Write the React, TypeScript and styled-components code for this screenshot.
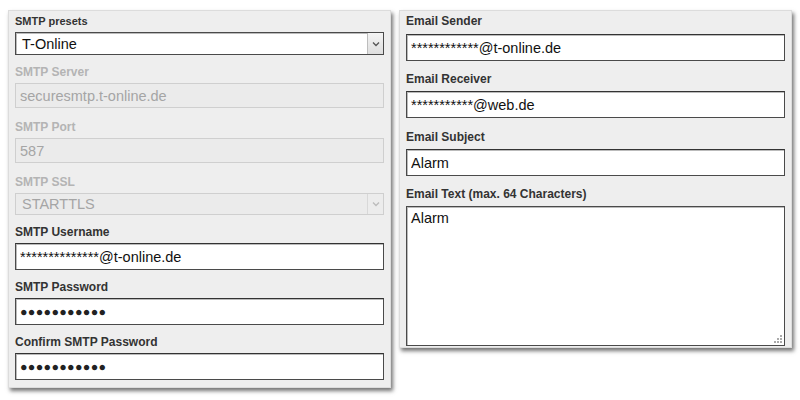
import React from 'react';
import styled, { createGlobalStyle } from 'styled-components';

const GlobalStyle = createGlobalStyle`
  html, body {
    margin: 0;
    padding: 0;
    background: #fff;
    font-family: "Liberation Sans", Arial, sans-serif;
  }
`;

const Page = styled.div`
  display: flex;
  align-items: flex-start;
  gap: 8px;
  padding: 10px 0 0 8px;
  width: 800px;
  height: 400px;
  box-sizing: border-box;
`;

const Panel = styled.div<{ $w: number; $pt: number; $pb: number }>`
  width: ${p => p.$w}px;
  box-sizing: border-box;
  padding: ${p => p.$pt}px 6px ${p => p.$pb}px 6px;
  background: #eeeeee;
  border: 1px solid #dcdcdc;
  box-shadow: 2px 3px 4px rgba(0, 0, 0, 0.55);
  display: flex;
  flex-direction: column;
`;

const Field = styled.div<{ $gap?: number }>`
  display: flex;
  flex-direction: column;
  flex-shrink: 0;
  margin-top: ${p => p.$gap ?? 0}px;
`;

const Label = styled.label<{ $disabled?: boolean; $small?: boolean; $mb?: number }>`
  display: block;
  height: 14px;
  font-size: ${p => (p.$small ? 11 : 12)}px;
  line-height: 14px;
  font-weight: bold;
  color: ${p => (p.$disabled ? '#b4b4b4' : '#333')};
  margin-bottom: ${p => p.$mb ?? 4}px;
`;

const Input = styled.input<{ $h: number }>`
  height: ${p => p.$h}px;
  flex-shrink: 0;
  box-sizing: border-box;
  width: 100%;
  margin: 0;
  padding: 0 4px;
  font-family: "Liberation Sans", Arial, sans-serif;
  font-size: 14.5px;
  color: #111;
  background: #fff;
  border: 1px solid #4a4a4a;
  border-top-color: #333;
  box-shadow: inset 1px 1px 0 #bbb;
  outline: none;

  &:disabled {
    background: #ebebeb;
    color: #a5a5a5;
    border-color: #cfcfcf;
    box-shadow: none;
  }
`;

const Dots = styled(Input)`
  font-size: 12.5px;
  letter-spacing: 0.3px;
  color: #222;
`;

const SelectBox = styled.div<{ $h: number; $disabled?: boolean }>`
  height: ${p => p.$h}px;
  flex-shrink: 0;
  box-sizing: border-box;
  display: flex;
  align-items: stretch;
  background: ${p => (p.$disabled ? '#ebebeb' : '#fff')};
  border: 1px solid ${p => (p.$disabled ? '#cfcfcf' : '#4a4a4a')};
  box-shadow: ${p => (p.$disabled ? 'none' : 'inset 1px 1px 0 #bbb')};
`;

const SelectValue = styled.span<{ $disabled?: boolean }>`
  flex: 1;
  display: flex;
  align-items: center;
  padding-left: 6px;
  font-size: 14.5px;
  color: ${p => (p.$disabled ? '#a5a5a5' : '#111')};
`;

const ArrowBox = styled.span<{ $disabled?: boolean }>`
  width: 15px;
  display: flex;
  align-items: center;
  justify-content: center;
  border-left: 1px solid ${p => (p.$disabled ? '#d8d8d8' : '#bdbdbd')};
  background: ${p => (p.$disabled ? '#ececec' : 'linear-gradient(#f4f4f4, #dedede)')};
`;

const TextArea = styled.div`
  position: relative;
  height: 140px;
  box-sizing: border-box;
  padding: 3px 4px;
  font-size: 14.5px;
  color: #111;
  background: #fff;
  border: 1px solid #4a4a4a;
  box-shadow: inset 1px 1px 0 #bbb;
`;

const Grip = styled.svg`
  position: absolute;
  right: 1px;
  bottom: 1px;
`;

const Chevron = ({ color }: { color: string }) => (
  <svg width="8" height="6" viewBox="0 0 8 6">
    <path d="M1 1.5 L4 4.5 L7 1.5" fill="none" stroke={color} strokeWidth="1.3" />
  </svg>
);

const Select = ({ value, h, disabled }: { value: string; h: number; disabled?: boolean }) => (
  <SelectBox $h={h} $disabled={disabled}>
    <SelectValue $disabled={disabled}>{value}</SelectValue>
    <ArrowBox $disabled={disabled}>
      <Chevron color={disabled ? '#bbb' : '#555'} />
    </ArrowBox>
  </SelectBox>
);

const dots = '●●●●●●●●●●●';

export default function App() {
  return (
    <>
      <GlobalStyle />
      <Page>
        <Panel $w={383} $pt={3} $pb={7}>
          <Field>
            <Label $small>SMTP presets</Label>
            <Select value="T-Online" h={23} />
          </Field>
          <Field $gap={10}>
            <Label $disabled>SMTP Server</Label>
            <Input $h={25} disabled value="securesmtp.t-online.de" readOnly />
          </Field>
          <Field $gap={12}>
            <Label $disabled>SMTP Port</Label>
            <Input $h={25} disabled value="587" readOnly />
          </Field>
          <Field $gap={12}>
            <Label $disabled>SMTP SSL</Label>
            <Select value="STARTTLS" h={22} disabled />
          </Field>
          <Field $gap={10}>
            <Label>SMTP Username</Label>
            <Input $h={27} value="**************@t-online.de" readOnly />
          </Field>
          <Field $gap={10}>
            <Label>SMTP Password</Label>
            <Dots $h={27} value={dots} readOnly />
          </Field>
          <Field $gap={10}>
            <Label>Confirm SMTP Password</Label>
            <Dots $h={27} value={dots} readOnly />
          </Field>
        </Panel>
        <Panel $w={393} $pt={3} $pb={1}>
          <Field>
            <Label $mb={6}>Email Sender</Label>
            <Input $h={27} value="************@t-online.de" readOnly />
          </Field>
          <Field $gap={11}>
            <Label $mb={5}>Email Receiver</Label>
            <Input $h={27} value="***********@web.de" readOnly />
          </Field>
          <Field $gap={12}>
            <Label $mb={5}>Email Subject</Label>
            <Input $h={27} value="Alarm" readOnly />
          </Field>
          <Field $gap={11}>
            <Label $mb={5}>Email Text (max. 64 Characters)</Label>
            <TextArea>
              Alarm
              <Grip width="10" height="10" viewBox="0 0 10 10">
                <g fill="#aaa">
                  <rect x="7" y="1" width="2" height="2" />
                  <rect x="4" y="4" width="2" height="2" />
                  <rect x="7" y="4" width="2" height="2" />
                  <rect x="1" y="7" width="2" height="2" />
                  <rect x="4" y="7" width="2" height="2" />
                  <rect x="7" y="7" width="2" height="2" />
                </g>
              </Grip>
            </TextArea>
          </Field>
        </Panel>
      </Page>
    </>
  );
}
